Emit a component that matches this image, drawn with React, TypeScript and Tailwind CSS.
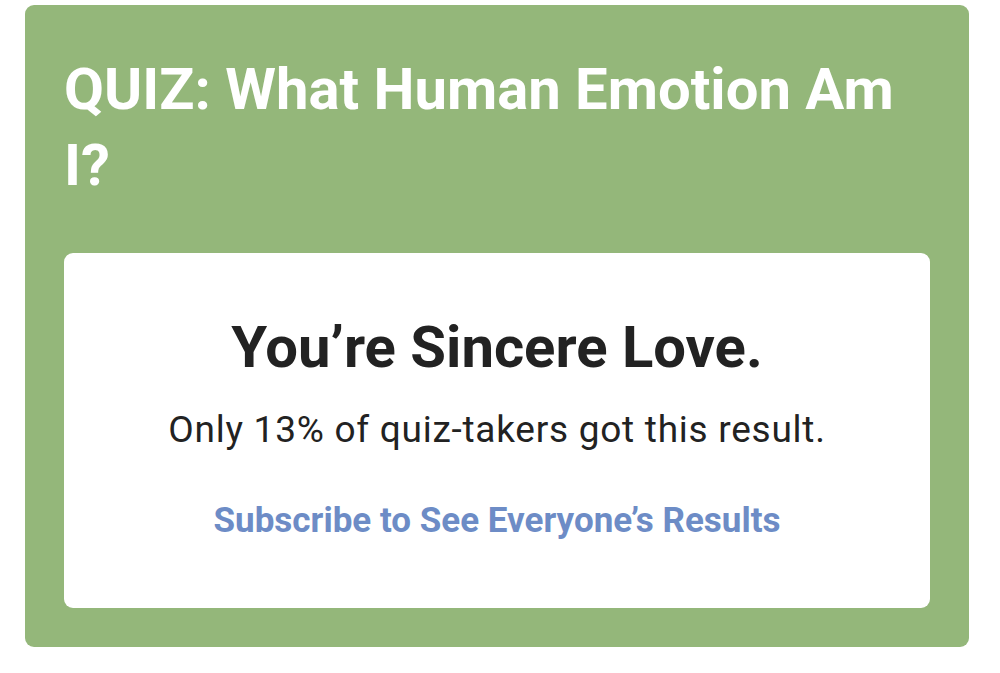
export default function App() {
  return (
    <div className="min-h-[673px] w-[1000px] bg-white pt-[5px] pl-[25px] font-['Roboto',sans-serif]">
      <div className="w-[944px] rounded-[9px] bg-[#94b77a] px-[39px] pt-[46px] pb-[39px]">
        <h1 className="text-[58px] font-bold leading-[76px] text-white">
          QUIZ: What Human Emotion Am I?
        </h1>
        <div className="mt-[50px] flex flex-col items-center rounded-[9px] bg-white pt-[58px] pb-[67px] text-center">
          <h2 className="text-[58px] font-bold leading-[72px] text-[#222222]">
            You’re Sincere Love.
          </h2>
          <p className="mt-[26px] text-[37px] leading-[42px] tracking-[0.02em] text-[#222222]">
            Only 13% of quiz-takers got this result.
          </p>
          <a className="mt-[49px] text-[35px] font-bold leading-[41px] text-[#6d8cc6]">
            Subscribe to See Everyone’s Results
          </a>
        </div>
      </div>
    </div>
  );
}
